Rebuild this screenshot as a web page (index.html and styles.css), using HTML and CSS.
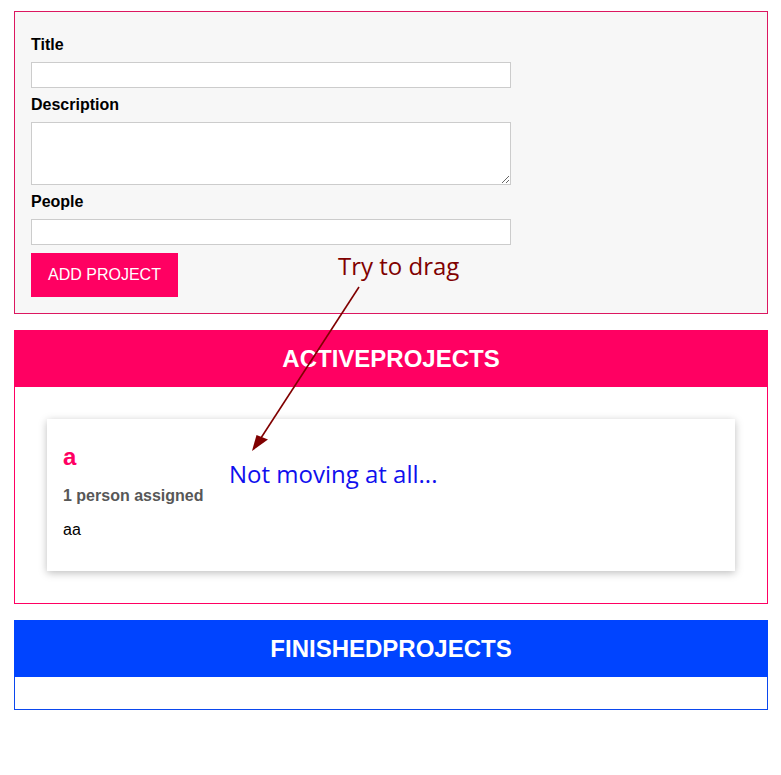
FILE: index.html
```html
<!DOCTYPE html>
<html lang="en">
<head>
<meta charset="utf-8">
<title>Projects</title>
<link rel="stylesheet" href="styles.css">
</head>
<body>
<main class="app">
  <form class="project-form">
    <label class="form-label" for="title">Title</label>
    <input class="form-input" id="title" type="text">
    <label class="form-label" for="description">Description</label>
    <textarea class="form-textarea" id="description"></textarea>
    <label class="form-label" for="people">People</label>
    <input class="form-input" id="people" type="number">
    <button class="form-button" type="button">ADD PROJECT</button>
  </form>

  <section class="projects projects-active">
    <header class="projects-header"><h2 class="projects-title">ACTIVEPROJECTS</h2></header>
    <ul class="projects-list">
      <li class="project-card">
        <h2 class="project-name">a</h2>
        <h3 class="project-people">1 person assigned</h3>
        <p class="project-desc">aa</p>
      </li>
    </ul>
  </section>

  <section class="projects projects-finished">
    <header class="projects-header"><h2 class="projects-title">FINISHEDPROJECTS</h2></header>
    <ul class="projects-list"></ul>
  </section>
</main>

<div class="note note-drag">Try to drag</div>
<div class="note note-stuck">Not moving at all...</div>
<svg class="note-arrow" width="781" height="775" viewBox="0 0 781 775" aria-hidden="true">
  <line x1="359" y1="287" x2="259" y2="441" stroke="#800000" stroke-width="1.6"/>
  <polygon points="252,451 256.5,435 268,439.5" fill="#800000"/>
</svg>
</body>
</html>
```
FILE: styles.css
```css
* { box-sizing: border-box; }

html, body {
  margin: 0;
  padding: 0;
  background: #ffffff;
}

body {
  font-family: "Liberation Sans", Arial, sans-serif;
  font-size: 16px;
  color: #000;
}

.app {
  margin: 11px 13px 0 14px;
  display: flex;
  flex-direction: column;
  gap: 16px;
}

.project-form {
  background: #f7f7f7;
  border: 1px solid #dc1760;
  padding: 16px;
  display: flex;
  flex-direction: column;
  align-items: flex-start;
}

.form-label {
  display: block;
  font-weight: bold;
  margin: 8px 0;
  line-height: 18px;
}

.form-input,
.form-textarea {
  display: block;
  width: 480px;
  border: 1px solid #cccccc;
  background: #fff;
  font: inherit;
  margin: 0;
  padding: 2px 4px;
}

.form-input { height: 26px; }
.form-textarea { height: 63px; resize: vertical; }

.form-button {
  margin-top: 8px;
  font: inherit;
  line-height: 18px;
  color: #fff;
  background: #ff0062;
  border: 1px solid #ff0062;
  padding: 12px 16px;
  width: 147px;
  height: 44px;
  cursor: pointer;
}

.projects {
  border: 1px solid #ff0062;
}

.projects-header {
  background: #ff0062;
  margin: -1px -1px 0 -1px;
  padding: 17px 16px 15px;
  height: 57px;
}

.projects-title {
  margin: 0;
  color: #fff;
  font-size: 24px;
  line-height: 24px;
  font-weight: bold;
  text-align: center;
}

.projects-finished { border-color: #0b48ee; }
.projects-finished .projects-header { background: #0044ff; }

.projects-list {
  list-style: none;
  margin: 0;
  padding: 16px;
}

.project-card {
  margin: 16px;
  padding: 16px;
  background: #fff;
  box-shadow: 0 2px 8px rgba(0, 0, 0, 0.26);
}

.project-name {
  margin: 8px 0 0;
  font-size: 24px;
  line-height: 28px;
  color: #ff0062;
}

.project-people {
  margin: 16px 0;
  font-size: 16px;
  line-height: 18px;
  color: #575757;
}

.project-desc {
  margin: 16px 0;
  line-height: 18px;
}

.note {
  position: absolute;
  font-family: "Open Sans", "Noto Sans", sans-serif;
  font-size: 24px;
  line-height: 30px;
  white-space: nowrap;
}

.note-drag {
  left: 338px;
  top: 251px;
  color: #800000;
}

.note-stuck {
  left: 229px;
  top: 459px;
  color: #1010ee;
}

.note-arrow {
  position: absolute;
  left: 0;
  top: 0;
  pointer-events: none;
}
```
